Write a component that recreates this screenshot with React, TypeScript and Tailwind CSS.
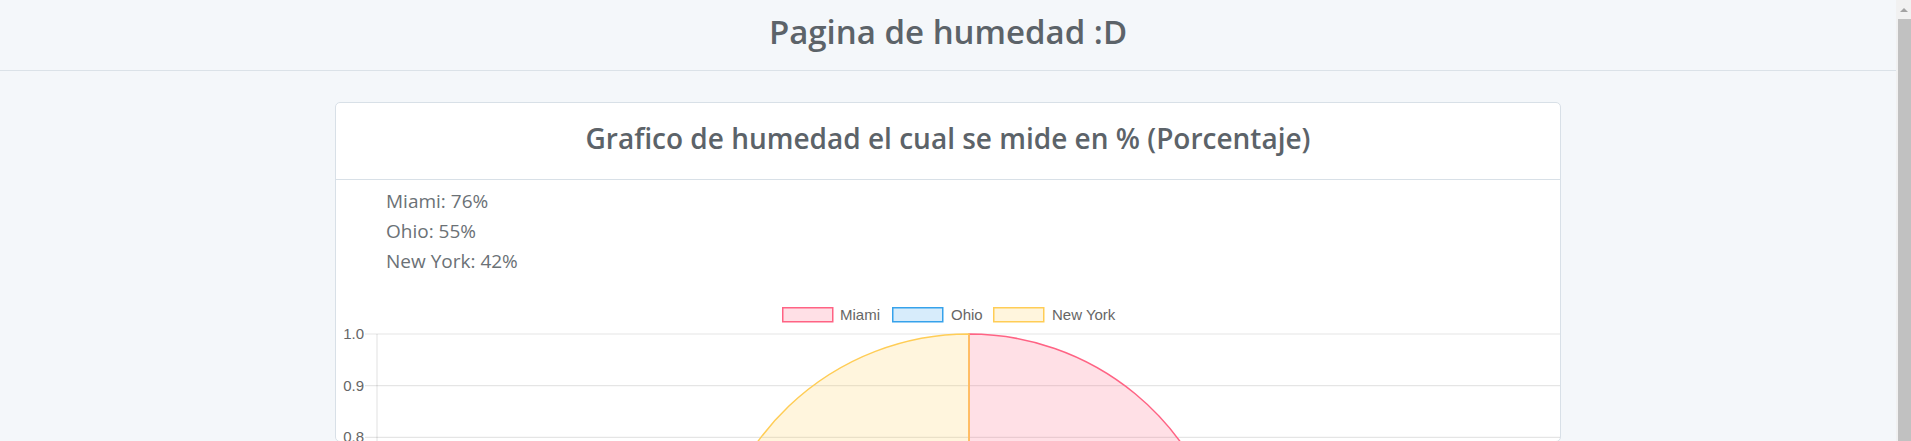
import React from "react";

const cities = [
  { name: "Miami", value: 76, fill: "rgba(255,99,132,0.2)", stroke: "rgb(255,99,132)" },
  { name: "Ohio", value: 55, fill: "rgba(54,162,235,0.2)", stroke: "rgb(54,162,235)" },
  { name: "New York", value: 42, fill: "rgba(255,205,86,0.2)", stroke: "rgb(255,205,86)" },
];

const legendX = [
  { box: 446, text: 504 },
  { box: 556, text: 615 },
  { box: 657, text: 716 },
];

function slicePaths(cx: number, cy: number, r: number) {
  const total = cities.reduce((s, c) => s + c.value, 0);
  let start = -Math.PI / 2;
  return cities.map((c) => {
    const sweep = (c.value / total) * Math.PI * 2;
    const end = start + sweep;
    const x1 = cx + r * Math.cos(start);
    const y1 = cy + r * Math.sin(start);
    const x2 = cx + r * Math.cos(end);
    const y2 = cy + r * Math.sin(end);
    const large = sweep > Math.PI ? 1 : 0;
    start = end;
    return `M${cx} ${cy} L${x1.toFixed(2)} ${y1.toFixed(2)} A${r} ${r} 0 ${large} 1 ${x2.toFixed(2)} ${y2.toFixed(2)} Z`;
  });
}

function HumidityChart() {
  const paths = slicePaths(633, 319, 261);
  const ticks = [
    { label: "1.0", y: 58 },
    { label: "0.9", y: 109.7 },
    { label: "0.8", y: 161.4 },
  ];
  return (
    <svg width={1224} height={165} className="block" style={{ fontFamily: '"Liberation Sans", Arial, sans-serif' }}>
      {/* legend */}
      {cities.map((c, i) => (
        <g key={c.name}>
          <rect x={legendX[i].box + 0.75} y={31.75} width={50} height={14} fill={c.fill} stroke={c.stroke} strokeWidth={1.5} />
          <text x={legendX[i].text} y={44} fontSize={15} fill="#666">
            {c.name}
          </text>
        </g>
      ))}

      {/* grid */}
      {ticks.map((t) => (
        <g key={t.label}>
          <line x1={29} x2={1224} y1={t.y} y2={t.y} stroke="rgba(0,0,0,0.1)" strokeWidth={1.2} />
          <text x={28} y={t.y + 5} fontSize={15} fill="#666" textAnchor="end">
            {t.label}
          </text>
        </g>
      ))}
      <line x1={41} x2={41} y1={58} y2={165} stroke="rgba(0,0,0,0.1)" strokeWidth={1.2} />

      {/* pie */}
      {paths.map((d, i) => (
        <path key={cities[i].name} d={d} fill={cities[i].fill} stroke={cities[i].stroke} strokeWidth={1.5} />
      ))}
    </svg>
  );
}

export default function App() {
  return (
    <div className="flex h-[441px] w-full overflow-hidden bg-[#f4f7fa]">
      <main className="flex-1 min-w-0" style={{ fontFamily: '"Open Sans", "Noto Sans", sans-serif' }}>
        <header className="flex h-[71px] items-center justify-center border-b border-[#dbe2e8] pb-[6px]">
          <h1 className="text-[33px] font-semibold text-[#5c6369]">Pagina de humedad :D</h1>
        </header>

        <div className="pl-[335px] pt-[31px]">
          <div className="w-[1226px] rounded-[5px] border border-[#d8e0e7] bg-white">
            <div className="flex h-[77px] items-center justify-center border-b border-[#d8e0e7] pb-[6px]">
              <h2 className="text-[28px] font-semibold text-[#5c6369]">
                Grafico de humedad el cual se mide en % (Porcentaje)
              </h2>
            </div>
            <div className="pt-[6px]">
              <ul className="pl-[50px] text-[19px] leading-[30px] text-[#6b7176]">
                {cities.map((c) => (
                  <li key={c.name}>
                    {c.name}: {c.value}%
                  </li>
                ))}
              </ul>
              <HumidityChart />
            </div>
          </div>
        </div>
      </main>

      {/* browser scrollbar */}
      <div className="flex w-[15px] flex-col bg-[#f1f1f1]">
        <div className="flex h-[19px] items-center justify-center">
          <div className="h-0 w-0 border-x-[4px] border-b-[4px] border-x-transparent border-b-[#a3a3a3]" />
        </div>
        <div className="ml-[2px] flex-1 bg-[#c1c1c1]" />
      </div>
    </div>
  );
}
